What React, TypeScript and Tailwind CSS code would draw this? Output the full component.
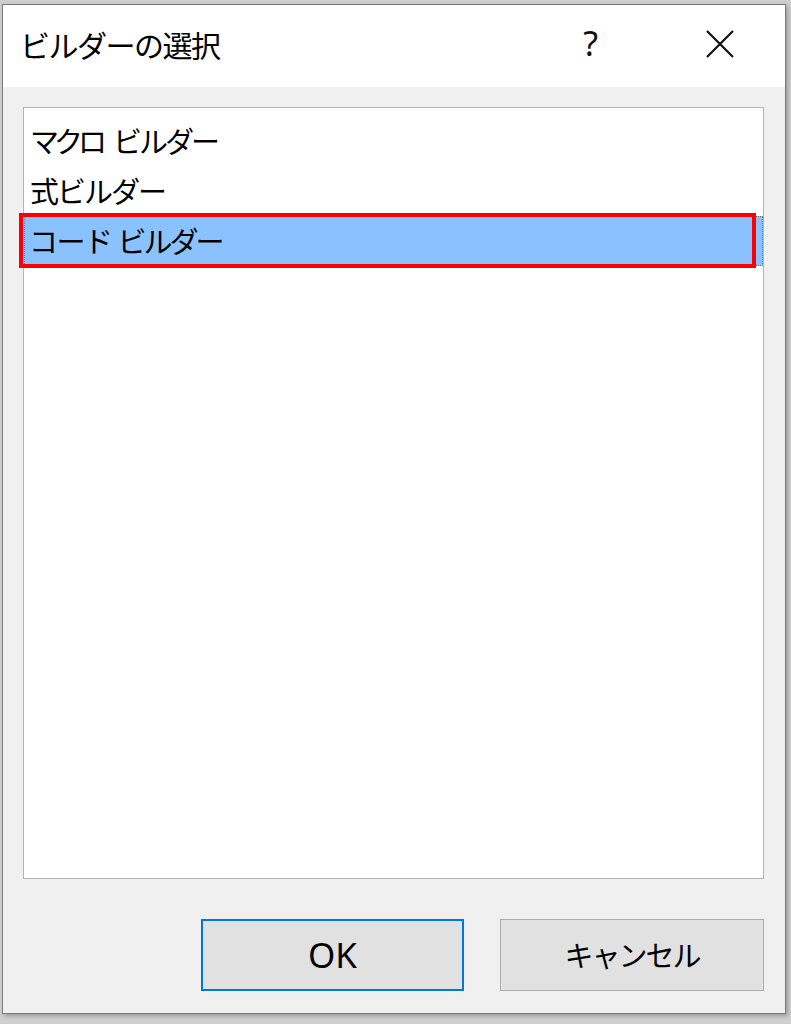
import React from "react";

const jp = "font-['Noto_Sans_CJK_JP',sans-serif]";

export default function App() {
  return (
    <div className="w-[791px] h-[1024px] bg-[#cfcfcf] overflow-hidden">
      <div className="ml-[2px] mt-[4px] w-[784px] h-[1010px] border border-[#7a7a7a] bg-[#f0f0f0] flex flex-col shadow-[2px_2px_4px_rgba(0,0,0,0.25)]">
        {/* Title bar */}
        <div className="h-[82px] bg-white flex items-center pl-[17px] pr-[50px]">
          <div className={`${jp} text-[30px] tracking-[-1.5px] text-black leading-none pb-[4px]`}>ビルダーの選択</div>
          <div className="flex-1" />
          <div className="font-['Noto_Sans',sans-serif] text-[34px] text-[#111] leading-none pb-[6px] mr-[107px]">?</div>
          <svg width="30" height="30" viewBox="0 0 30 30" className="mb-[4px]">
            <path d="M2 2 L28 28 M28 2 L2 28" stroke="#111" strokeWidth="2.2" fill="none" />
          </svg>
        </div>
        {/* Body */}
        <div className="flex-1 flex flex-col pl-[20px] pr-[21px] pt-[20px] pb-[21px]">
          <div className="h-[772px] border border-[#b4b4b4] bg-white pt-[8px] flex flex-col">
            <div className={`${jp} h-[50px] flex items-center pl-[6px] text-[29px] text-black leading-none`}>
              <span className="pb-[2px] tracking-[-5px]">マクロ</span>
              <span className="inline-block w-[11px]" />
              <span className="pb-[2px] tracking-[-3px]">ビルダー</span>
            </div>
            <div className={`${jp} h-[50px] flex items-center pl-[6px] text-[29px] tracking-[-2px] text-black leading-none`}>
              <span className="pb-[2px]">式ビルダー</span>
            </div>
            <div className={`${jp} relative h-[50px] flex items-center pl-[4px] text-[29px] text-black leading-none bg-[#89c2ff] border border-dotted border-[#7a7a7a]`}>
              <span className="pb-[2px] tracking-[-1.5px]">コード</span>
              <span className="inline-block w-[6px]" />
              <span className="pb-[2px] tracking-[-3px]">ビルダー</span>
              <div className="absolute left-[-6px] top-[-4px] w-[737px] h-[55px] border-[4px] border-[#ff0000]" />
            </div>
          </div>
          <div className="flex justify-end gap-[36px] mt-[40px]">
            <button className="w-[263px] h-[72px] border-2 border-[#0078d7] bg-[#e1e1e1] flex items-center justify-center">
              <span className="font-['Noto_Sans',sans-serif] text-[35px] text-black leading-none pb-[2px]">OK</span>
            </button>
            <button className="w-[264px] h-[72px] border border-[#adadad] bg-[#e1e1e1] flex items-center justify-center">
              <span className={`${jp} text-[29px] tracking-[-2px] text-black leading-none pb-[2px]`}>キャンセル</span>
            </button>
          </div>
        </div>
      </div>
    </div>
  );
}
